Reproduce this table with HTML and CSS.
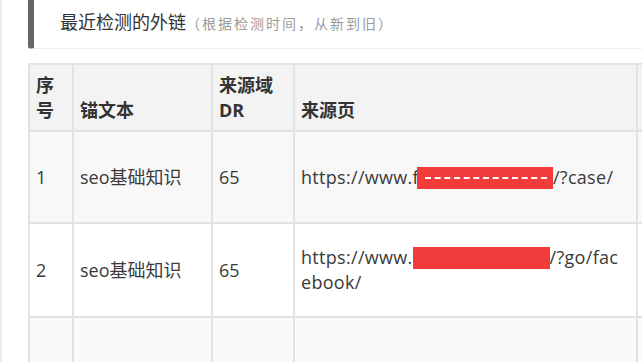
FILE: index.html
```html
<!DOCTYPE html>
<html lang="zh-CN">
<head>
<meta charset="utf-8">
<title>最近检测的外链</title>
<link rel="stylesheet" href="styles.css">
</head>
<body>
<div class="page">
  <div class="section-title">
    <span class="title-main">最近检测的外链</span><span class="title-sub">（根据检测时间，从新到旧）</span>
  </div>
  <table class="links">
    <colgroup>
      <col class="c-no">
      <col class="c-anchor">
      <col class="c-dr">
      <col class="c-src">
      <col class="c-more">
    </colgroup>
    <thead>
      <tr class="head-row">
        <th>序号</th>
        <th>锚文本</th>
        <th>来源域DR</th>
        <th>来源页</th>
        <th></th>
      </tr>
    </thead>
    <tbody>
      <tr class="row row-1">
        <td>1</td>
        <td>seo基础知识</td>
        <td>65</td>
        <td class="url">https://www.f<span class="redact r1"><span class="dash"></span></span>/?case/</td>
        <td></td>
      </tr>
      <tr class="row row-2">
        <td>2</td>
        <td>seo基础知识</td>
        <td>65</td>
        <td class="url">https://www.<span class="redact r2"></span>/?go/facebook/</td>
        <td></td>
      </tr>
      <tr class="row row-3">
        <td></td>
        <td></td>
        <td></td>
        <td></td>
        <td></td>
      </tr>
    </tbody>
  </table>
</div>
</body>
</html>
```

FILE: styles.css
```css
html, body {
  margin: 0;
  padding: 0;
  background: #ffffff;
  overflow: hidden;
}

body {
  width: 642px;
  height: 362px;
  font-family: "Open Sans", "Noto Sans CJK SC", sans-serif;
  color: #333333;
}

.page {
  border-left: 2px solid #ececec;
  padding-left: 26px;
  height: 362px;
  box-sizing: border-box;
}

.section-title {
  height: 48px;
  border-left: 6px solid #666666;
  border-bottom: 1px solid #efefef;
  border-bottom-left-radius: 3px;
  padding-left: 26px;
  line-height: 44px;
  white-space: nowrap;
}

.title-main {
  font-size: 18px;
  color: #333333;
}

.title-sub {
  font-size: 14px;
  letter-spacing: 2px;
  color: #9a9a9a;
}

.links {
  margin-top: 14px;
  border-collapse: collapse;
  table-layout: fixed;
  width: 720px;
  font-size: 18px;
  line-height: 25px;
}

.c-no { width: 44px; }
.c-anchor { width: 139px; }
.c-dr { width: 82px; }
.c-src { width: 343px; }
.c-more { width: 112px; }

.links th,
.links td {
  border: 2px solid #e2e2e2;
  padding: 7px 8px 7px 6px;
  text-align: left;
}

.links th {
  font-weight: bold;
  vertical-align: bottom;
  background: #f3f3f3;
  color: #333333;
}

.head-row { height: 67px; }

.links td {
  vertical-align: middle;
  color: #3a3a3a;
}

.row-1 { height: 92px; background: #f8f8f8; }
.row-2 { height: 94px; background: #ffffff; }
.row-3 { height: 94px; background: #f9f9f9; }

.links td.url {
  word-break: break-all;
  letter-spacing: 0.3px;
  padding-right: 16px;
}

.redact {
  display: inline-block;
  background: #f23b3b;
  height: 22px;
  vertical-align: -5px;
}

.r1 {
  width: 136px;
  margin-left: -2px;
}

.r2 {
  width: 137px;
}

.dash {
  display: block;
  margin: 10px 6px 0 8px;
  border-top: 2px dashed #ffffff;
}
```
